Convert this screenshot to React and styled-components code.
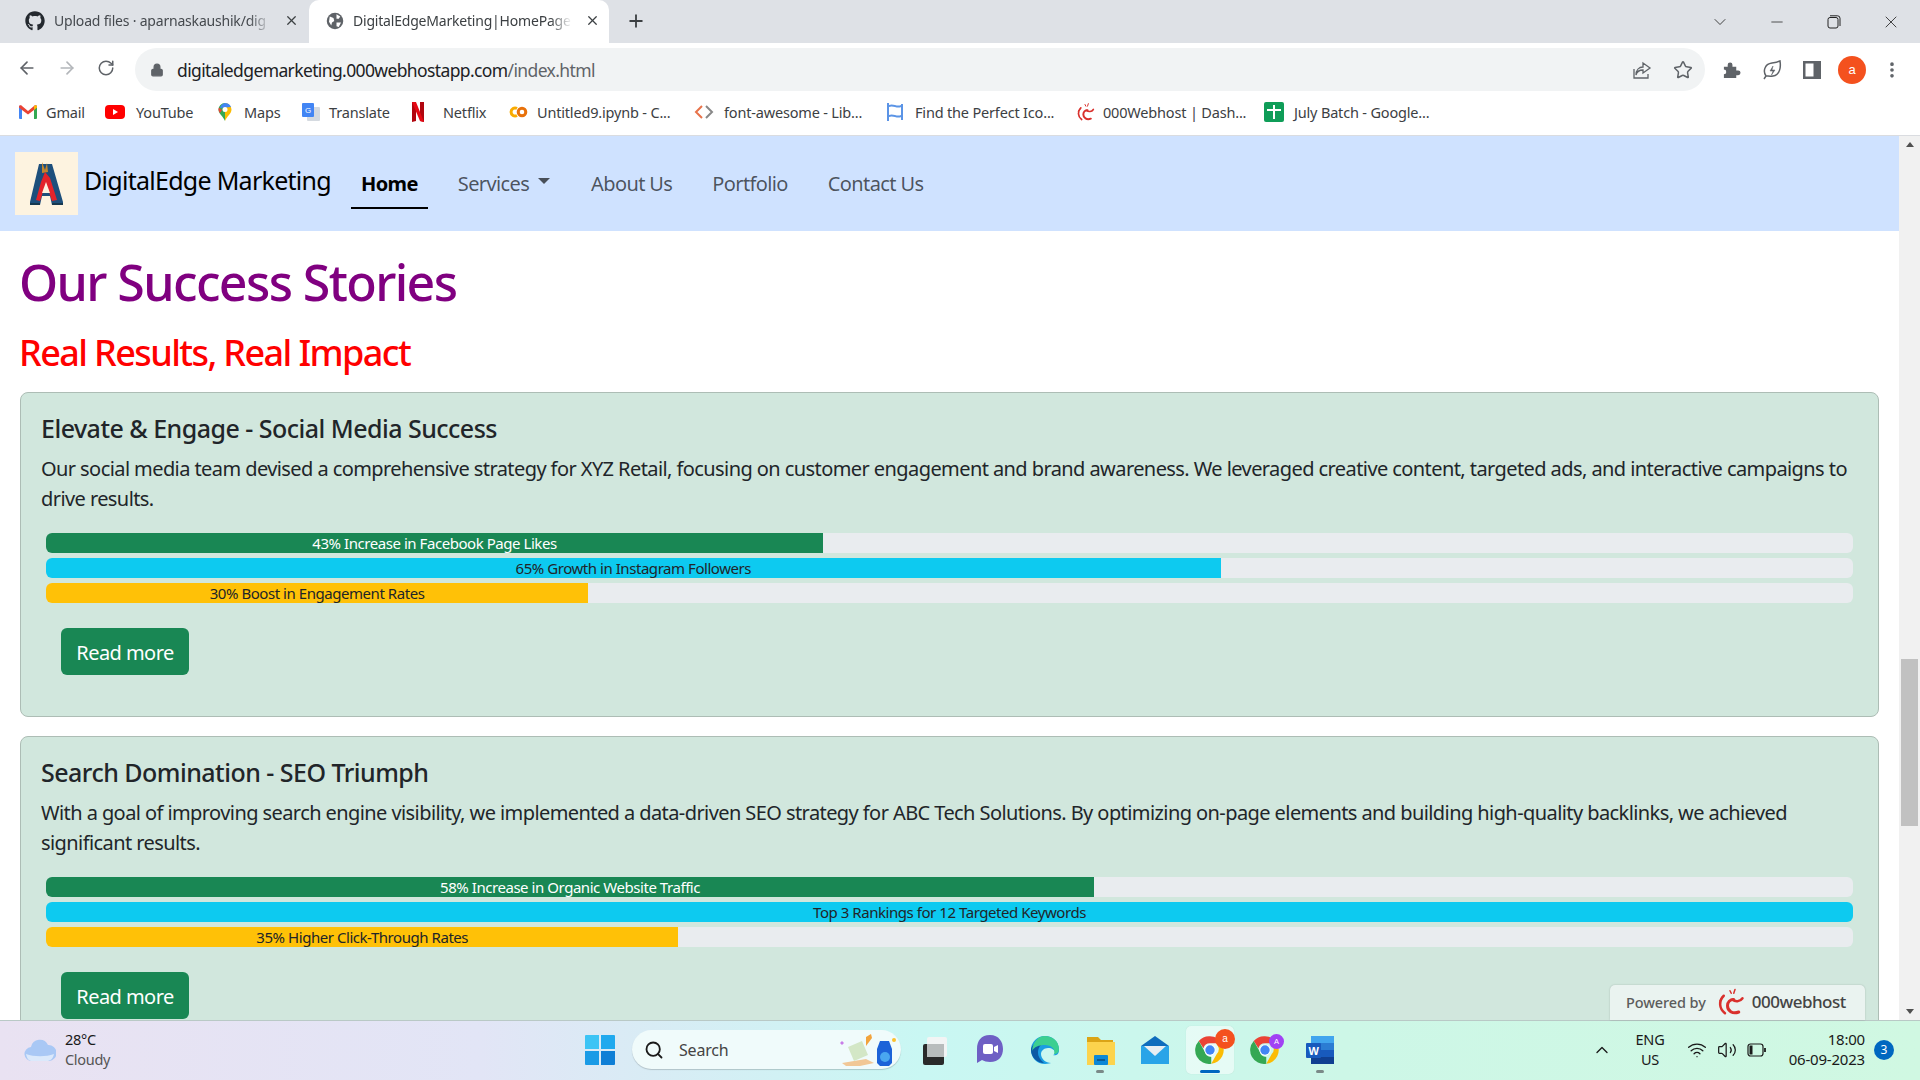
import React from 'react';
import styled, { createGlobalStyle } from 'styled-components';
import { FaGithub } from 'react-icons/fa';
import { X, Plus, ArrowLeft, ArrowRight, RotateCw, Lock, Star, ChevronDown, Minus, MoreVertical, Search, ChevronUp, Wifi, Volume2 } from 'lucide-react';

const SANS = '"Noto Sans", "Open Sans", sans-serif';

const Global = createGlobalStyle`
  html, body { margin: 0; padding: 0; height: 100%; overflow: hidden; }
  body { font-family: ${SANS}; background: #fff; }
  * { box-sizing: border-box; }
`;

const Screen = styled.div`
  width: 1920px; height: 1080px; display: flex; flex-direction: column; overflow: hidden;
`;
const TabStrip = styled.div`
  height: 43px; background: #dee1e6; display: flex; align-items: stretch; flex: none;
`;
const Tab = styled.div`
  width: ${p => p.$w}px; display: flex; align-items: center; padding-left: ${p => p.$pl}px; padding-bottom: 2px;
  gap: 9px; font-size: 14px; letter-spacing: -0.2px; color: ${p => p.$active ? '#3c4043' : '#45494e'};
  background: ${p => p.$active ? '#fff' : 'transparent'}; border-radius: 10px 10px 0 0;
`;
const TabTitle = styled.span`
  width: ${p => p.$w}px; white-space: nowrap;
  -webkit-mask-image: linear-gradient(90deg, #000 90%, transparent);
  mask-image: linear-gradient(90deg, #000 90%, transparent);
`;
const TabClose = styled.span`display: flex; margin-left: 4px; color: #3c4043;`;
const NewTab = styled.span`display: flex; margin-left: 17px; padding-bottom: 1px; align-items: center; color: #3c4043;`;
const Spacer = styled.div`flex: 1;`;
const WinControls = styled.div`display: flex; align-items: center; padding-right: 1px; color: #222;`;
const WinBtn = styled.span`width: 57px; display: flex; justify-content: center;`;

const Toolbar = styled.div`
  height: 48px; flex: none; background: #fff; display: flex; align-items: flex-end; padding-left: 17px;
`;
const NavIcons = styled.div`
  height: 41px; align-self: flex-start; margin-top: 4px; display: flex; align-items: center; gap: 20px; width: 118px; color: #5f6368;
`;
const Omnibox = styled.div`
  width: 1570px; height: 43px; border-radius: 22px; background: #f1f3f4; display: flex; align-items: center; padding: 0 9px 0 15px;
`;
const Url = styled.span`
  margin-left: 13px; font-size: 17.5px; letter-spacing: -0.62px; color: #202124;
`;
const UrlDim = styled.span`color: #5f6368;`;
const OmniRight = styled.div`margin-left: auto; display: flex; align-items: center; gap: 21px; color: #5f6368; padding-right: 3px;`;
const ToolIcons = styled.div`
  height: 43px; display: flex; align-items: center; margin-left: 7px; color: #5f6368;
`;
const ToolSlot = styled.span`width: 40px; display: flex; justify-content: center; align-items: center;`;
const Avatar = styled.div`
  width: 28px; height: 28px; border-radius: 50%; background: #f4511e; color: #fff; display: flex; align-items: center;
  justify-content: center; font-size: 13px; font-family: "Liberation Sans", sans-serif;
`;
const TileAvatar = styled(Avatar)`
  position: absolute; top: ${p => p.$top}px; left: ${p => p.$left}px; width: ${p => p.$size}px; height: ${p => p.$size}px;
  font-size: ${p => p.$size / 2}px; background: ${p => p.$bg};
`;

const Bookmarks = styled.div`
  height: 45px; flex: none; background: #fff; display: flex; align-items: center; padding: 0 0 2px 18px;
  border-bottom: 1px solid #dadce0;
`;
const Bookmark = styled.div`
  width: ${p => p.$w}px; flex: none; display: flex; align-items: center; gap: ${p => p.$gap}px; font-size: 14.5px; letter-spacing: -0.18px; color: #3c4043; white-space: nowrap;
`;
const BmIcon = styled.svg`width: 20px; height: 20px; flex: none;`;

const Viewport = styled.div`flex: 1; min-height: 0; display: flex; position: relative;`;
const Page = styled.div`flex: 1; min-width: 0; overflow: hidden; background: #fff;`;
const Navbar = styled.nav`
  height: 95px; background: #cfe2ff; display: flex; align-items: flex-start; padding: 16px 0 0 15px;
`;
const LogoBox = styled.svg`width: 63px; height: 63px; flex: none;`;
const Brand = styled.span`
  margin: 9px 0 0 6px; font-size: 25px; line-height: 38px; color: #000; width: 267px; white-space: nowrap; letter-spacing: -0.72px;
`;
const NavItem = styled.a`
  display: flex; align-items: center; height: 57px; padding: 8px ${p => p.$active ? 10 : 0}px 0; margin-right: ${p => p.$mr}px; white-space: nowrap;
  font-size: 20px; letter-spacing: -0.62px; font-weight: ${p => p.$active ? 700 : 400}; color: ${p => p.$active ? '#000' : 'rgba(0,0,0,.65)'};
  border-bottom: 2px solid ${p => p.$active ? '#000' : 'transparent'};
`;
const Caret = styled.i`
  display: inline-block; margin-left: 9px; margin-bottom: 5px; border-top: 6px solid rgba(0,0,0,.65); border-left: 6px solid transparent; border-right: 6px solid transparent;
`;
const Content = styled.main`padding: 21px 20px 0;`;
const H1 = styled.h1`
  margin: 0 0 0 -1px; font-size: 50px; line-height: 60px; font-weight: 500; color: purple; letter-spacing: -1.6px;
`;
const H2 = styled.h2`
  margin: 17px 0 0 -1px; font-size: 36px; line-height: 48px; font-weight: 500; color: red; letter-spacing: -1.6px;
`;
const Card = styled.section`
  margin-top: ${p => p.$mt}px; height: 325px; background: #d1e7dd; border: 1px solid #adbdb5; border-radius: 8px; padding: 20px;
`;
const CardTitle = styled.h5`
  margin: 0 0 11px; font-size: 25px; line-height: 30px; font-weight: 500; color: #212529; letter-spacing: -0.52px;
`;
const CardText = styled.p`
  margin: 0; font-size: 20px; line-height: 30px; color: #212529; letter-spacing: -0.58px;
`;
const Bars = styled.div`margin: 19px 5px 0; display: flex; flex-direction: column; gap: 5px;`;
const Track = styled.div`height: 20px; background: #e9ecef; border-radius: 6px; overflow: hidden; display: flex;`;
const Fill = styled.div`
  background: ${p => p.$bg}; color: ${p => p.$fg}; font-size: 15px; line-height: 20px; text-align: center; white-space: nowrap; letter-spacing: -0.45px;
`;
const ReadMore = styled.a`
  display: inline-flex; align-items: center; justify-content: center; margin: 25px 0 0 20px; padding-top: 2px; width: 128px; height: 47px; background: #198754; color: #fff;
  border-radius: 6px; font-size: 20px; letter-spacing: -0.55px;
`;
const Powered = styled.div`
  position: absolute; left: 1610px; bottom: 0; width: 255px; height: 35px; background: #eaf3f0; border-radius: 5px 5px 0 0; padding-bottom: 2px;
  box-shadow: 0 0 2px rgba(0,0,0,.2); display: flex; align-items: center; padding-left: 16px; color: #5c5c5c; font-size: 14.5px; font-weight: 500; letter-spacing: -0.1px; gap: 9px;
`;
const PoweredName = styled.span`font-size: 17px; color: #444; letter-spacing: -0.5px; margin-left: -2px;`;

const Scrollbar = styled.div`
  width: 21px; flex: none; background: #f1f1f1; display: flex; flex-direction: column; align-items: center;
`;
const ScrollArrow = styled.i`
  height: 17px; flex: none; display: flex; align-items: center; justify-content: center;
  &::before { content: ''; border-left: 4.5px solid transparent; border-right: 4.5px solid transparent;
    ${p => p.$down ? 'border-top: 5px solid #505050;' : 'border-bottom: 5px solid #505050;'} }
`;
const Thumb = styled.div`width: 17px; height: 167px; margin-top: 506px; background: #c1c1c1;`;

const Taskbar = styled.footer`
  height: 60px; flex: none; border-top: 1px solid #b9c9c6; display: flex; align-items: center; padding-bottom: 2px;
  background: linear-gradient(90deg, #e9e2f2 0%, #e2e5f6 25%, #c9f7f3 48%, #cdf7e7 70%, #d0f8e2 100%);
`;
const Weather = styled.div`width: 585px; display: flex; align-items: center; padding-left: 24px; gap: 9px; flex: none;`;
const WeatherText = styled.div`font-size: 14.5px; line-height: 20px; letter-spacing: -0.3px; color: #1a1a1a; padding-bottom: 2px;`;
const Dim = styled.div`color: #555;`;
const StartWrap = styled.svg`width: 30px; height: 30px; flex: none;`;
const SearchPill = styled.div`
  width: 269px; height: 39px; margin-left: 17px; border-radius: 20px; background: #f0fbfb; box-shadow: 0 1px 1px rgba(0,0,0,.18); display: flex; align-items: center; padding-left: 12px; gap: 15px;
  font-size: 16px; color: #444; letter-spacing: -0.2px; flex: none;
`;
const SearchArt = styled.svg`width: 62px; height: 34px; margin-left: auto; margin-right: 3px;`;
const TaskIcons = styled.div`display: flex; margin-left: 6px; flex: none;`;
const TaskIcon = styled.div`
  width: 55px; height: 50px; flex: none; display: flex; align-items: center; justify-content: center; position: relative;
  ${p => p.$active && `&::before { content: ''; position: absolute; inset: 1px 3.5px; background: rgba(255,255,255,.5); border-radius: 5px; box-shadow: 0 0 1px rgba(0,0,0,.15); }`}
  & > svg { position: relative; }
`;
const TaskDot = styled.i`
  position: absolute; bottom: 2px; left: 50%; transform: translateX(-50%); height: 3px; border-radius: 2px;
  width: ${p => p.$wide ? 20 : 8}px; background: ${p => p.$wide ? '#0067c0' : '#7a8a88'};
`;
const Tray = styled.div`display: flex; align-items: center; margin-left: 245px; flex: none; color: #1a1a1a;`;
const Lang = styled.div`
  width: 44px; margin-left: 16px; font-size: 14.5px; line-height: 20px; text-align: center; letter-spacing: -0.2px; padding-bottom: 2px;
`;
const TrayIcons = styled.div`display: flex; align-items: center; gap: 10px; margin-left: 15px;`;
const Clock = styled.div`
  margin-left: 14px; width: 84px; font-size: 15px; line-height: 20px; text-align: right; letter-spacing: -0.2px; white-space: nowrap; padding-bottom: 2px;
`;
const Badge = styled.div`
  width: 20px; height: 20px; margin-left: 9px; border-radius: 50%; background: #0067c0; color: #fff; font-size: 12px; display: flex; align-items: center; justify-content: center;
`;

const ChromeLogo = ({ size = 30 }) => (
  <svg width={size} height={size} viewBox="0 0 48 48">
    <path d="M24 2a22 22 0 0 1 19 11H24a11 11 0 0 0-10.500 8L6 9.500A22 22 0 0 1 24 2z" fill="#ea4335" />
    <path d="M43 13a22 22 0 0 1-17 33l9-16a11 11 0 0 0-2-17z" fill="#fbbc04" />
    <path d="M26 46A22 22 0 0 1 6 9.500l9.500 17A11 11 0 0 0 26 35z" fill="#34a853" />
    <circle cx="24" cy="24" r="9" fill="#fff" />
    <circle cx="24" cy="24" r="7.500" fill="#4285f4" />
  </svg>
);

const WebhostMark = ({ size = 20 }) => (
  <svg width={size} height={size} viewBox="0 0 24 24" fill="none" stroke="#d9302c" strokeLinecap="round">
    <path d="M8 21C3 17 3 11 7 7" strokeWidth="2" />
    <path d="M19 20c-5 2-9-1-9-5 0-3 2-5 5-5" strokeWidth="2.400" />
    <path d="M22 9c-2 3-6 3-8 1" strokeWidth="2" />
    <path d="M12 3l1 2M16 2l-1 3M6 8l-2 3" strokeWidth="1.200" />
  </svg>
);

const stories = [
  {
    title: 'Elevate & Engage - Social Media Success',
    text: 'Our social media team devised a comprehensive strategy for XYZ Retail, focusing on customer engagement and brand awareness. We leveraged creative content, targeted ads, and interactive campaigns to drive results.',
    bars: [
      ['43% Increase in Facebook Page Likes', 43, '#198754', '#fff'],
      ['65% Growth in Instagram Followers', 65, '#0dcaf0', '#212529'],
      ['30% Boost in Engagement Rates', 30, '#ffc107', '#212529'],
    ],
  },
  {
    title: 'Search Domination - SEO Triumph',
    text: 'With a goal of improving search engine visibility, we implemented a data-driven SEO strategy for ABC Tech Solutions. By optimizing on-page elements and building high-quality backlinks, we achieved significant results.',
    bars: [
      ['58% Increase in Organic Website Traffic', 58, '#198754', '#fff'],
      ['Top 3 Rankings for 12 Targeted Keywords', 100, '#0dcaf0', '#212529'],
      ['35% Higher Click-Through Rates', 35, '#ffc107', '#212529'],
    ],
  },
];

export default function App() {
  return (
    <Screen>
      <Global />
      <TabStrip>
        <Tab $w={309} $pl={25}>
          <FaGithub size={20} color="#24292f" />
          <TabTitle $w={217}>Upload files · aparnaskaushik/dig</TabTitle>
          <TabClose><X size={15} strokeWidth={2} /></TabClose>
        </Tab>
        <Tab $w={300} $active $pl={17}>
          <svg width="18" height="18" viewBox="0 0 24 24"><circle cx="12" cy="12" r="11" fill="#5f6368" /><path d="M5 6l5 2 1 4-3 2-1 4-3-5zM14 3l5 3-2 3-3 0zM14 14l6 0-3 6-3-1z" fill="#fff" /></svg>
          <TabTitle $w={219}>DigitalEdgeMarketing|HomePage</TabTitle>
          <TabClose><X size={15} strokeWidth={2} /></TabClose>
        </Tab>
        <NewTab><Plus size={20} strokeWidth={2.2} /></NewTab>
        <Spacer />
        <WinControls>
          <WinBtn><ChevronDown size={20} strokeWidth={1} /></WinBtn>
          <WinBtn><Minus size={18} strokeWidth={1} /></WinBtn>
          <WinBtn>
            <svg width="14" height="14" viewBox="0 0 14 14" fill="none" stroke="#222"><rect x="1" y="2.500" width="10" height="10.500" rx="2" /><path d="M3 .8h7.500A2.500 2.500 0 0 1 13 3.300V11" /></svg>
          </WinBtn>
          <WinBtn><X size={20} strokeWidth={1} /></WinBtn>
        </WinControls>
      </TabStrip>

      <Toolbar>
        <NavIcons>
          <ArrowLeft size={20} />
          <ArrowRight size={20} color="#b3b6ba" />
          <RotateCw size={18} />
        </NavIcons>
        <Omnibox>
          <Lock size={14} fill="#5f6368" color="#5f6368" />
          <Url>digitaledgemarketing.000webhostapp.com<UrlDim>/index.html</UrlDim></Url>
          <OmniRight>
            <svg width="20" height="20" viewBox="0 0 20 20" fill="none" stroke="#5f6368" strokeWidth="1.300"><path d="M2 9v9h14v-4" /><path d="M11 3l7 5-7 5V10c-4 0-6 1-7 5 0-5 3-8 7-8z" /></svg>
            <Star size={20} strokeWidth={1.8} />
          </OmniRight>
        </Omnibox>
        <ToolIcons>
          <ToolSlot>
            <svg width="20" height="20" viewBox="0 0 20 20" fill="#5f6368"><path d="M2 7h4V5a2.500 2.500 0 0 1 5 0v2h4v4h2a2.500 2.500 0 0 1 0 5h-2v3H2v-4a2.500 2.500 0 0 0 0-5V7z" transform="scale(.95)" /></svg>
          </ToolSlot>
          <ToolSlot>
            <svg width="20" height="20" viewBox="0 0 20 20" fill="none" stroke="#5f6368" strokeWidth="1.500"><path d="M2 19l2-3C1 12 2 4 10 3c3-.3 6-1 8-2 1 6 0 14-7 15-3 .4-5 0-7 0" /><path d="M11 6l-3 5h3l-1.500 4 3.500-5h-3z" fill="#5f6368" strokeWidth=".5" /></svg>
          </ToolSlot>
          <ToolSlot>
            <svg width="18" height="18" viewBox="0 0 18 18"><rect width="18" height="18" fill="#5f6368" /><rect x="2.500" y="2.500" width="8" height="13" fill="#fff" /></svg>
          </ToolSlot>
          <ToolSlot><Avatar>a</Avatar></ToolSlot>
          <ToolSlot><MoreVertical size={20} strokeWidth={2.4} /></ToolSlot>
        </ToolIcons>
      </Toolbar>

      <Bookmarks>
        <Bookmark $w={87} $gap={8}>
          <BmIcon viewBox="0 0 20 20"><path d="M1 5a2 2 0 0 1 1-1.500L4 5v12H2a1 1 0 0 1-1-1z" fill="#4285f4" /><path d="M16 6l3-2.500V16a1 1 0 0 1-1 1h-2z" fill="#34a853" /><path d="M1.500 3.500C3 3 4 4 4 4l6 5 6-5s1-1 2.500-.5c.5.5.5 1.500.5 2L16 8l-6 4.500L4 8 1 5.500c0-.5 0-1.500.5-2z" fill="#ea4335" /><path d="M16 4c1-.8 2-.8 2.500-.5.5.5.5 1.500.5 2L16 8z" fill="#fbbc04" /></BmIcon>
          Gmail
        </Bookmark>
        <Bookmark $w={110} $gap={11}>
          <BmIcon viewBox="0 0 20 20"><rect y="3" width="20" height="14" rx="4" fill="#f00" /><path d="M8 7l5 3-5 3z" fill="#fff" /></BmIcon>
          YouTube
        </Bookmark>
        <Bookmark $w={86} $gap={9}>
          <BmIcon viewBox="0 0 20 20"><path d="M10 1a6.500 6.500 0 0 0-6.500 6.500c0 4.500 4.500 6.500 6.500 11.500z" fill="#34a853" /><path d="M10 1a6.500 6.500 0 0 1 6.500 6.500c0 4.500-4.500 6.500-6.500 11.500z" fill="#fbbc04" /><path d="M10 1a6.500 6.500 0 0 1 6 4L5 6a6.500 6.500 0 0 1 5-5z" fill="#4285f4" /><path d="M3.800 5.500L7 8l-2 3c-1-1-1.500-2.500-1.500-3.500z" fill="#ea4335" /><circle cx="10" cy="7.500" r="2.500" fill="#fff" /></BmIcon>
          Maps
        </Bookmark>
        <Bookmark $w={107} $gap={8}>
          <BmIcon viewBox="0 0 20 20"><rect x="6" y="5" width="13" height="14" rx="1" fill="#d5dae0" /><rect x="1" y="1" width="12" height="14" rx="1" fill="#4285f4" /><text x="4" y="11" fontSize="8" fill="#fff" fontFamily="Liberation Sans">G</text></BmIcon>
          Translate
        </Bookmark>
        <Bookmark $w={100} $gap={15}>
          <BmIcon viewBox="0 0 20 20"><path d="M4 0h4v19l-4 1z" fill="#b1060f" /><path d="M12 0h4v20l-4-1z" fill="#b1060f" /><path d="M4 0h4l8 20-4-1z" fill="#e50914" /></BmIcon>
          Netflix
        </Bookmark>
        <Bookmark $w={186} $gap={9}>
          <BmIcon viewBox="0 0 20 20" fill="none" stroke="#f9ab00" strokeWidth="3"><path d="M9 6.500a4 4 0 1 0 0 7" /><circle cx="14" cy="10" r="3.800" stroke="#e8710a" /></BmIcon>
          Untitled9.ipynb - C...
        </Bookmark>
        <Bookmark $w={191} $gap={10}>
          <BmIcon viewBox="0 0 20 20" fill="none" strokeWidth="2"><path d="M8 4L2 10l6 6" stroke="#e8734a" /><path d="M12 4l6 6-6 6" stroke="#888" /></BmIcon>
          font-awesome - Lib...
        </Bookmark>
        <Bookmark $w={190} $gap={10}>
          <BmIcon viewBox="0 0 20 20"><path d="M2 1h2v18H2zM16 2h2v16h-2zM4 3c4-2 8 2 12 0v2c-4 2-8-2-12 0zM4 13c4-2 8 2 12 0v2c-4 2-8-2-12 0z" fill="#5b94e6" /></BmIcon>
          Find the Perfect Ico...
        </Bookmark>
        <Bookmark $w={189} $gap={8}>
          <WebhostMark />
          000Webhost | Dash...
        </Bookmark>
        <Bookmark $w={170} $gap={10}>
          <BmIcon viewBox="0 0 20 20"><rect width="20" height="20" rx="2" fill="#0f9d58" /><path d="M3 8h14M10 3v14" stroke="#fff" strokeWidth="2" /></BmIcon>
          July Batch - Google...
        </Bookmark>
      </Bookmarks>

      <Viewport>
        <Page>
          <Navbar>
            <LogoBox viewBox="0 0 63 63">
              <rect width="63" height="63" fill="#fdf3e0" />
              <path d="M24 12h13l11 38v3H37l-2-9h-8l-2 9H15v-3z" fill="#1d4f7c" />
              <path d="M27 10l3 8 2-7 1 9-6 1z" fill="#c2862e" />
              <path d="M30 20l5 6 7 22-5 1-3-9h-6l-3 9-4-1 5-18z" fill="#e3242a" />
              <path d="M31 30l4 11h-8z" fill="#fdf3e0" />
              <path d="M15 51h10v2H15zM37 51h11v2H37z" fill="#16384f" />
            </LogoBox>
            <Brand>DigitalEdge Marketing</Brand>
            <NavItem $active $mr={30}>Home</NavItem>
            <NavItem $mr={41}>Services<Caret /></NavItem>
            <NavItem $mr={40}>About Us</NavItem>
            <NavItem $mr={40}>Portfolio</NavItem>
            <NavItem $mr={0}>Contact Us</NavItem>
          </Navbar>
          <Content>
            <H1>Our Success Stories</H1>
            <H2>Real Results, Real Impact</H2>
            {stories.map((s, i) => (
              <Card key={s.title} $mt={i === 0 ? 15 : 19}>
                <CardTitle>{s.title}</CardTitle>
                <CardText>{s.text}</CardText>
                <Bars>
                  {s.bars.map(([label, v, bg, fg]) => (
                    <Track key={label}>
                      <Fill $bg={bg} $fg={fg} style={{ width: `${v}%` }}>{label}</Fill>
                    </Track>
                  ))}
                </Bars>
                <ReadMore>Read more</ReadMore>
              </Card>
            ))}
          </Content>
        </Page>
        <Scrollbar>
          <ScrollArrow />
          <Thumb />
          <Spacer />
          <ScrollArrow $down />
        </Scrollbar>
        <Powered>
          Powered by<WebhostMark size={30} /><PoweredName>000webhost</PoweredName>
        </Powered>
      </Viewport>

      <Taskbar>
        <Weather>
          <svg width="32" height="26" viewBox="0 0 32 26"><path d="M8 24a7 7 0 0 1-1-14 9 9 0 0 1 17-2 7 7 0 0 1 1 16z" fill="#a9c8f5" /><path d="M2 17c8 3 20 3 28 0-1 5-4 7-7 7H8c-3 0-5-2-6-7z" fill="#dbe9fb" /></svg>
          <WeatherText>28°C<Dim>Cloudy</Dim></WeatherText>
        </Weather>
        <StartWrap viewBox="0 0 30 30">
          <path d="M0 1a1 1 0 0 1 1-1h13v14H0z" fill="#3cc4f5" />
          <path d="M16 0h13a1 1 0 0 1 1 1v13H16z" fill="#20a9ee" />
          <path d="M0 16h14v14H1a1 1 0 0 1-1-1z" fill="#1a9be6" />
          <path d="M16 16h14v13a1 1 0 0 1-1 1H16z" fill="#0f7fd6" />
        </StartWrap>
        <SearchPill>
          <Search size={20} color="#1a1a1a" strokeWidth={2.2} />
          Search
          <SearchArt viewBox="0 0 58 34">
            <path d="M2 10l2-2 2 2-2 2z" fill="#c77de8" />
            <path d="M4 30l24-4 8 4-14 3H8z" fill="#f1c796" />
            <path d="M10 14l14-6 6 14-14 6z" fill="#d3e7c6" />
            <path d="M28 4l5-3 1 4-6 8z" fill="#f2a33c" />
            <path d="M42 8h9l3 8v14l-3 3h-9l-3-3V16z" fill="#1c63d8" />
            <circle cx="47" cy="24" r="5" fill="#49a7f0" />
            <circle cx="56" cy="7" r="2" fill="#fbc02d" />
          </SearchArt>
        </SearchPill>
        <TaskIcons>
          <TaskIcon>
            <svg width="30" height="30" viewBox="0 0 30 30"><rect x="7" y="2" width="20" height="20" rx="2" fill="#f2f4f4" /><rect x="3" y="9" width="21" height="21" rx="2" fill="#2a2a2a" /><rect x="7" y="9" width="17" height="13" fill="#b8bcbc" /></svg>
          </TaskIcon>
          <TaskIcon>
            <svg width="30" height="32" viewBox="0 0 30 32"><path d="M15 1C6 1 2 7 2 15v14l5-3c2 1 5 2 8 2 9 0 13-6 13-13S24 1 15 1z" fill="#6e5fc4" /><rect x="8" y="10" width="10" height="10" rx="2" fill="#fff" /><path d="M19 13l4-2v8l-4-2z" fill="#fff" /></svg>
          </TaskIcon>
          <TaskIcon>
            <svg width="30" height="30" viewBox="0 0 30 30"><path d="M15 1A14 14 0 0 0 1 15c0 8 6 14 14 14 3 0 5-1 6-1-5 0-10-4-10-9 0-3 3-6 7-6 4 0 7 2 7 5 0 1-1 2-2 2 2 1 6 0 6-5C29 7 23 1 15 1z" fill="#1b9de2" /><path d="M1 15c0-5 6-8 12-6-3 1-5 4-5 9 0 3 2 7 6 10C7 28 1 22 1 15z" fill="#0c59a4" /><path d="M15 1c7 0 14 5 14 13 0 3-2 5-5 5 2-5-3-9-9-9-6 0-11 2-13 6C3 7 8 1 15 1z" fill="#3ccf91" /></svg>
          </TaskIcon>
          <TaskIcon>
            <svg width="30" height="30" viewBox="0 0 30 30"><path d="M2 2h11l3 3h12v6H2z" fill="#dba416" /><rect x="2" y="7" width="28" height="23" fill="#fcd34d" /><rect x="9" y="20" width="14" height="10" rx="1" fill="#0c88d6" /><rect x="12" y="24" width="8" height="2" fill="#0a5a94" /></svg>
            <TaskDot />
          </TaskIcon>
          <TaskIcon>
            <svg width="30" height="30" viewBox="0 0 30 30"><path d="M15 1L29 11v18H1V11z" fill="#0f6cbd" /><path d="M1 11h28v18H1z" fill="#29a4e8" /><path d="M4 11h22l-11 10z" fill="#e8eef3" /></svg>
          </TaskIcon>
          <TaskIcon $active>
            <ChromeLogo />
            <TileAvatar $top={4} $left={33} $size={20} $bg="#f4511e">a</TileAvatar>
            <TaskDot $wide />
          </TaskIcon>
          <TaskIcon>
            <ChromeLogo />
            <TileAvatar $top={9} $left={32} $size={15} $bg="#a142f4">A</TileAvatar>
          </TaskIcon>
          <TaskIcon>
            <svg width="30" height="30" viewBox="0 0 30 30"><rect x="6" y="1" width="23" height="28" rx="1.500" fill="#2b7cd3" /><rect x="6" y="1" width="23" height="7" fill="#41a5ee" /><rect x="6" y="15" width="23" height="7" fill="#185abd" /><rect x="6" y="22" width="23" height="7" fill="#103f91" /><rect x="1" y="8" width="15" height="15" rx="1" fill="#185abd" /><text x="3.500" y="19.500" fontSize="11" fontWeight="700" fill="#fff" fontFamily="Liberation Sans">W</text></svg>
            <TaskDot />
          </TaskIcon>
        </TaskIcons>
        <Tray>
          <ChevronUp size={20} strokeWidth={1.6} />
          <Lang>ENG<br />US</Lang>
          <TrayIcons>
            <Wifi size={20} strokeWidth={1.6} />
            <Volume2 size={20} strokeWidth={1.5} />
            <svg width="20" height="14" viewBox="0 0 20 14" fill="none" stroke="#1a1a1a" strokeWidth="1.200"><rect x="1" y="1" width="15" height="12" rx="2.500" /><rect x="2.500" y="2.500" width="3" height="9" fill="#1a1a1a" stroke="none" /><path d="M18 5v4" strokeWidth="1.800" /></svg>
          </TrayIcons>
          <Clock>18:00<br />06-09-2023</Clock>
          <Badge>3</Badge>
        </Tray>
      </Taskbar>
    </Screen>
  );
}
